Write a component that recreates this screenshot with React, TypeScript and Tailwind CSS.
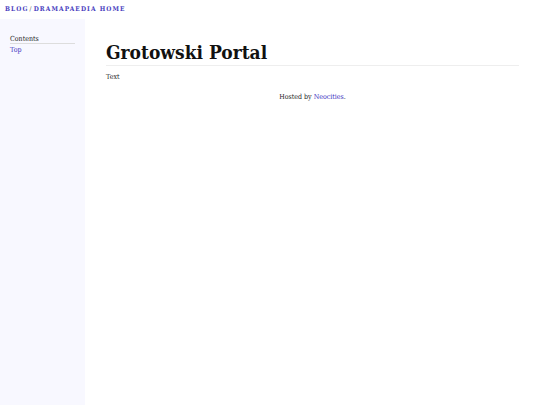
import React from "react";

const SERIF = "font-['DejaVu_Serif_Condensed','DejaVu_Serif',serif]";

export default function App(): React.JSX.Element {
  return (
    <div className={`${SERIF} flex min-h-[405px] flex-col bg-white text-[#222]`}>
      {/* nav */}
      <nav className="flex h-[19px] items-center px-[5px] text-[6.5px] font-bold tracking-[0.17em] text-[#4a3fc0] uppercase">
        <a href="#">Blog</a>
        <span className="mx-[1px] font-normal text-[#555]">/</span>
        <a href="#">Dramapaedia Home</a>
      </nav>
      <div className="flex flex-1">
        {/* sidebar */}
        <aside className="w-[85px] shrink-0 bg-[#f8f8ff] px-[10px] pt-[16px]">
          <div className="border-b border-[#ddd] text-[7px] leading-[8px] text-[#222]">Contents</div>
          <a href="#" className="mt-[2px] block text-[7px] leading-[8px] text-[#3b2fc0]">
            Top
          </a>
        </aside>
        {/* main */}
        <main className="flex-1 px-[21px] pt-[21px]">
          <h1 className="border-b border-[#eee] pb-[1px] text-[19px] leading-[24px] font-bold text-[#111]">
            Grotowski Portal
          </h1>
          <p className="mt-[7px] text-[7px] leading-[9px]">Text</p>
          <footer className="mt-[11px] text-center text-[7px] leading-[9px]">
            Hosted by{" "}
            <a href="#" className="text-[#3b2fc0]">
              Neocities
            </a>
            .
          </footer>
        </main>
      </div>
    </div>
  );
}
